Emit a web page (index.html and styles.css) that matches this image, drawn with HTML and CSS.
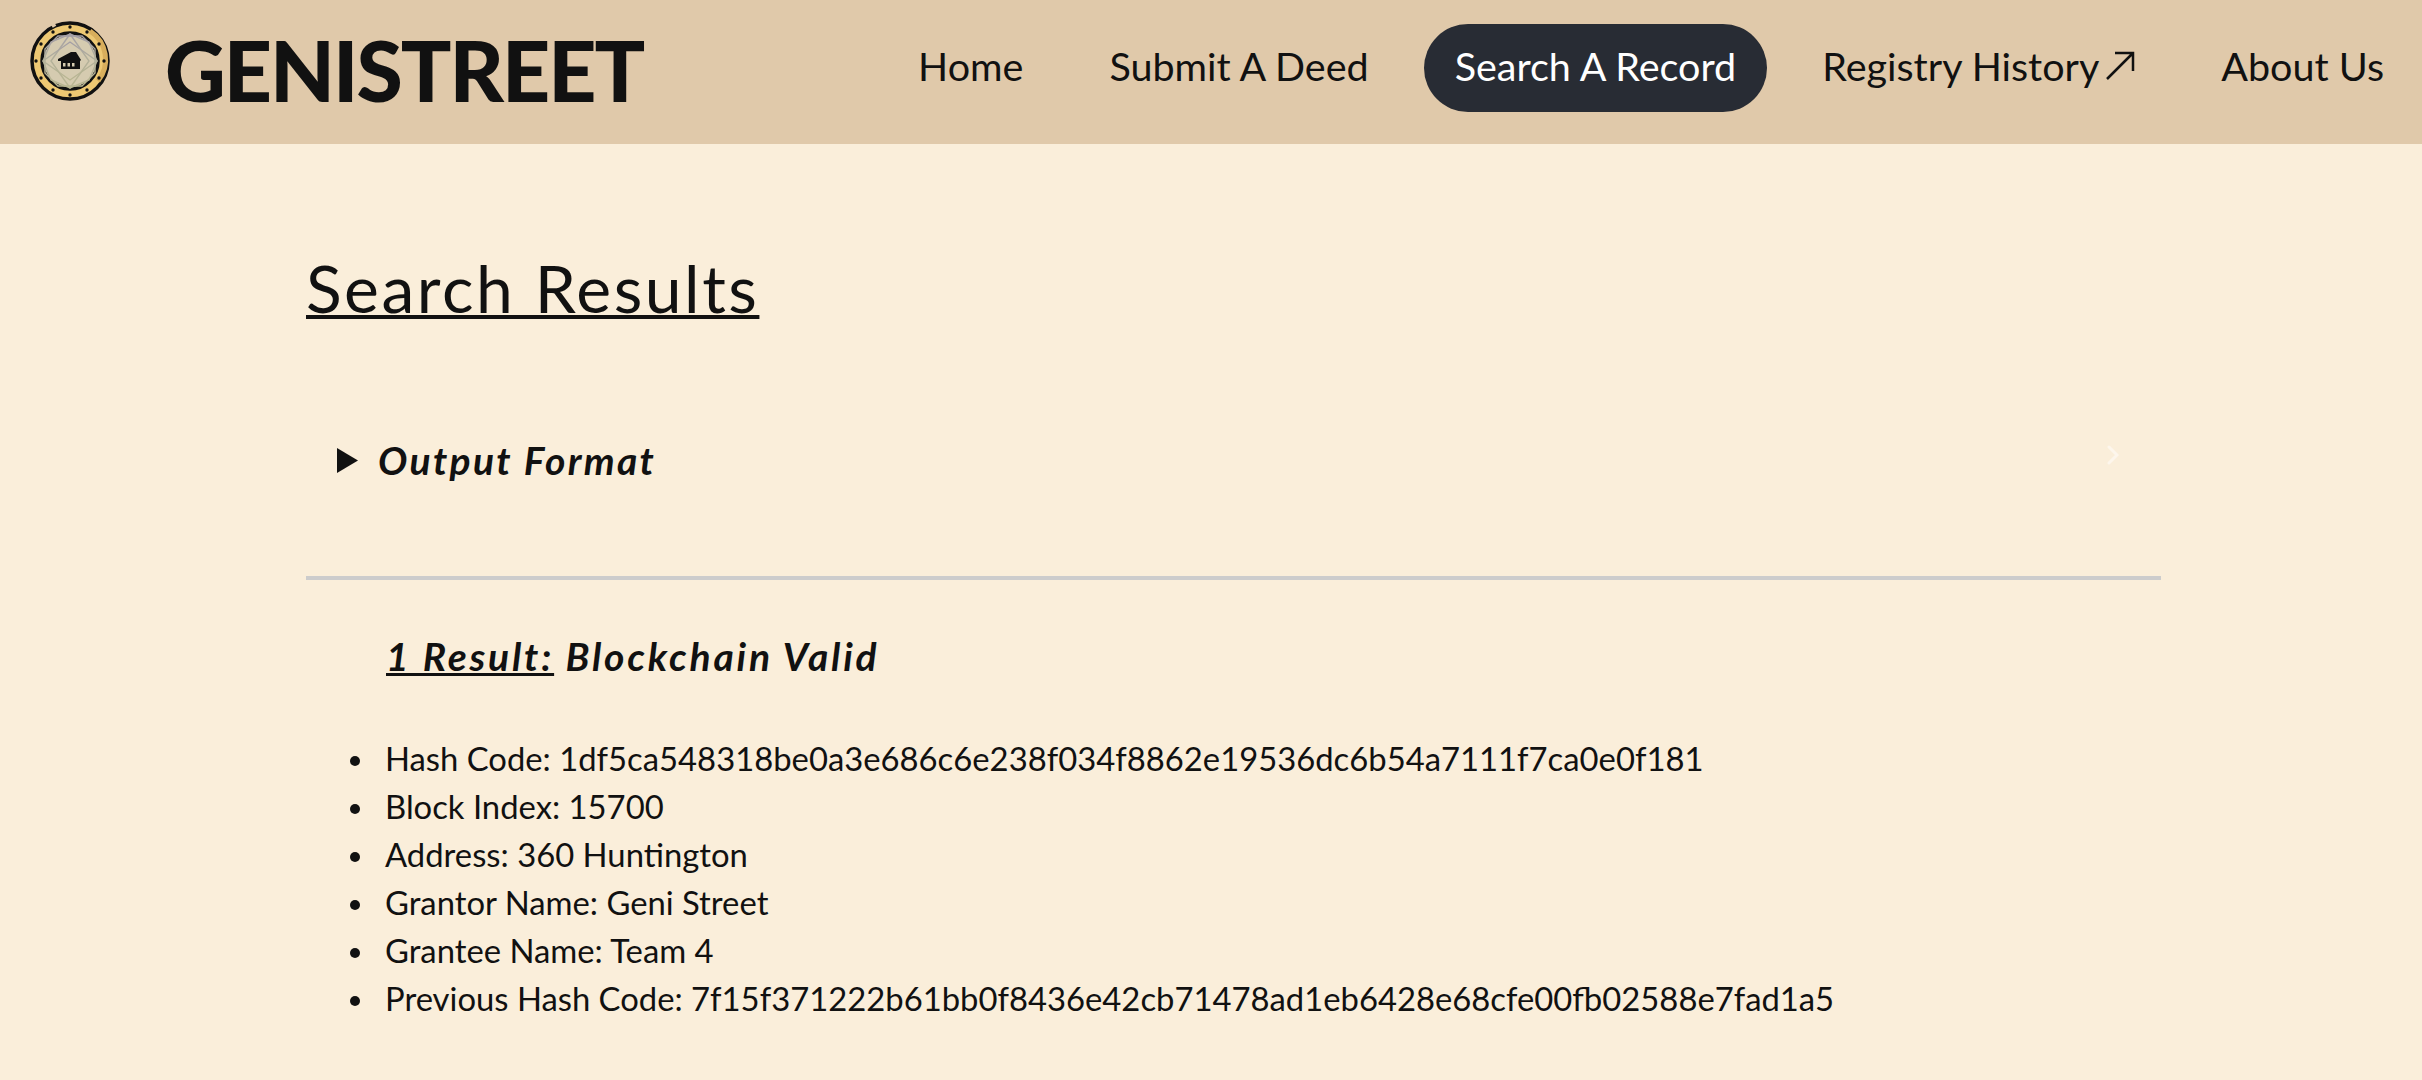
FILE: index.html
```html
<!DOCTYPE html>
<html lang="en">
<head>
    <meta charset="UTF-8">
    <meta name="viewport" content="width=device-width, initial-scale=1.0">
    <title>Search Results</title>
    <link rel="stylesheet" href="styles.css">
</head>
<body>
    <!-- Top bar -->
    <header class="navbar">
        <div class="brand">
            <svg class="brand-seal" viewBox="0 0 84 84" aria-hidden="true">
                <defs>
                    <linearGradient id="seal-lines" x1="0" y1="0" x2="0" y2="1">
                        <stop offset="0" stop-color="#a39ea6"/>
                        <stop offset="0.5" stop-color="#b3b199"/>
                        <stop offset="1" stop-color="#b9b691"/>
                    </linearGradient>
                </defs>
                <circle cx="42" cy="42" r="38" fill="#edc873" stroke="#111" stroke-width="3.5"/>
                <path d="M62 12a34 34 0 0 1 8 50" fill="none" stroke="#d8ae5c" stroke-width="5"/>
                <path d="M27 4.5 23.500 6.500" fill="none" stroke="#e0c9aa" stroke-width="5"/>
                <circle cx="42" cy="42" r="28" fill="#d5cbb0" stroke="#111" stroke-width="3.5"/>
                <g fill="none" stroke="url(#seal-lines)" stroke-width="1.4">
                    <path d="M42 15 61 23 69 42 61 61 42 69 23 61 15 42 23 23Z"/>
                    <path d="M30 17 54 17 67 30 67 54 54 67 30 67 17 54 17 30Z"/>
                    <path d="M42 15 23 42 42 69 61 42Z"/>
                    <path d="M15 42 42 23 69 42 42 61Z"/>
                </g>
                <g fill="#111">
                    <circle cx="42" cy="8" r="1.7"/>
                    <circle cx="59" cy="13" r="1.7"/>
                    <circle cx="71" cy="25" r="1.7"/>
                    <circle cx="76" cy="42" r="1.7"/>
                    <circle cx="71" cy="59" r="1.7"/>
                    <circle cx="59" cy="71" r="1.7"/>
                    <circle cx="42" cy="76" r="1.7"/>
                    <circle cx="25" cy="71" r="1.7"/>
                    <circle cx="13" cy="59" r="1.7"/>
                    <circle cx="8" cy="42" r="1.7"/>
                    <circle cx="13" cy="25" r="1.7"/>
                    <circle cx="25" cy="13" r="1.7"/>
                    <path d="M30 40 43 33 48 33 53 41 52 42 52 50 33 50 33 42 30 42Z"/>
                </g>
                <g fill="#d5cbb0">
                    <rect x="35" y="44" width="2.500" height="3.500"/>
                    <rect x="39.500" y="44" width="2.500" height="3.500"/>
                    <rect x="44" y="44" width="2.500" height="3.500"/>
                </g>
            </svg>
            <span class="brand-name">GENISTREET</span>
        </div>
        <nav class="nav-links">
            <a href="#">Home</a>
            <a href="#">Submit A Deed</a>
            <a href="#" class="active">Search A Record</a>
            <a href="#">Registry History<svg class="external-arrow" viewBox="0 0 30 30" aria-hidden="true"><path d="M2 28 28 2M10 2H28V20"/></svg></a>
            <a href="#">About Us</a>
        </nav>
    </header>

    <main class="content">
        <h1>Search Results</h1>

        <div class="format-row">
            <svg class="format-arrow" viewBox="0 0 21 25" aria-hidden="true"><path d="M0 0 21 12.5 0 25Z"/></svg>
            <span class="format-label">Output Format</span>
            <svg class="format-chevron" viewBox="0 0 12 20" aria-hidden="true"><path d="M2 2 10 10 2 18"/></svg>
        </div>

        <hr class="divider">

        <h3 class="result-title"><u>1 Result:</u> Blockchain Valid</h3>

        <ul class="result-list">
            <li>Hash Code: 1df5ca548318be0a3e686c6e238f034f8862e19536dc6b54a7111f7ca0e0f181</li>
            <li>Block Index: 15700</li>
            <li>Address: 360 Huntington</li>
            <li>Grantor Name: Geni Street</li>
            <li>Grantee Name: Team 4</li>
            <li>Previous Hash Code: 7f15f371222b61bb0f8436e42cb71478ad1eb6428e68cfe00fb02588e7fad1a5</li>
        </ul>
    </main>
</body>
</html>
```

FILE: styles.css
```css
body {
    margin: 0;
    background-color: #faeeda;
    color: #111;
    font-family: Lato, "Noto Sans", sans-serif;
}
.navbar {
    display: flex;
    justify-content: space-between;
    align-items: center;
    height: 144px;
    padding: 0 38px 0 28px;
    background-color: #e0c9aa;
}
.brand {
    display: flex;
    align-items: center;
    gap: 53px;
}
.brand-seal {
    width: 84px;
    height: 84px;
    margin-top: -22px;
}
.brand-name {
    font-size: 84px;
    font-weight: 900;
    letter-spacing: -2px;
    line-height: 1;
    margin-top: -4px;
}
.nav-links {
    display: flex;
    align-items: center;
    gap: 24px;
    margin-top: -8px;
}
.nav-links a {
    padding: 18px 31px 22px;
    border-radius: 44px;
    color: #111;
    font-size: 39.5px;
    line-height: 48px;
    text-decoration: none;
}
.nav-links a:last-child {
    padding-right: 0;
}
.nav-links a.active {
    background-color: #282c34;
    color: #fff;
}
.external-arrow {
    width: 30px;
    height: 30px;
    margin-left: 6px;
    fill: none;
    stroke: #111;
    stroke-width: 2.5;
}
.content {
    margin: 0 261px 0 306px;
}
h1 {
    margin: 0;
    padding-top: 101px;
    font-size: 66px;
    font-weight: 400;
    letter-spacing: 2.5px;
    line-height: 86px;
    text-decoration: underline;
    text-decoration-thickness: 4px;
}
.format-row {
    display: flex;
    align-items: center;
    margin-top: 104px;
    padding-left: 31px;
    height: 50px;
}
.format-arrow {
    width: 21px;
    height: 25px;
    fill: #111;
}
.format-label {
    margin-left: 20px;
    font-size: 39px;
    font-style: italic;
    font-weight: 700;
    letter-spacing: 2.3px;
}
.format-chevron {
    width: 12px;
    height: 20px;
    margin-left: auto;
    margin-right: 42px;
    margin-top: -10px;
    fill: none;
    stroke: #fdf6ec;
    stroke-width: 3;
    stroke-linecap: round;
}
.divider {
    margin: 91px 0 0;
    border: 0;
    height: 4px;
    background-color: #ccc;
}
.result-title {
    margin: 50px 0 0 80px;
    font-size: 39px;
    font-style: italic;
    font-weight: 700;
    letter-spacing: 2.8px;
    line-height: 52px;
}
.result-list {
    margin: 53px 0 0;
    padding-left: 79px;
    font-size: 32.8px;
    line-height: 48px;
    list-style: none;
}
.result-list li::before {
    content: "";
    display: inline-block;
    width: 10px;
    height: 10px;
    margin-left: -35px;
    margin-right: 25px;
    border-radius: 50%;
    background-color: #111;
    vertical-align: 5px;
}
```
